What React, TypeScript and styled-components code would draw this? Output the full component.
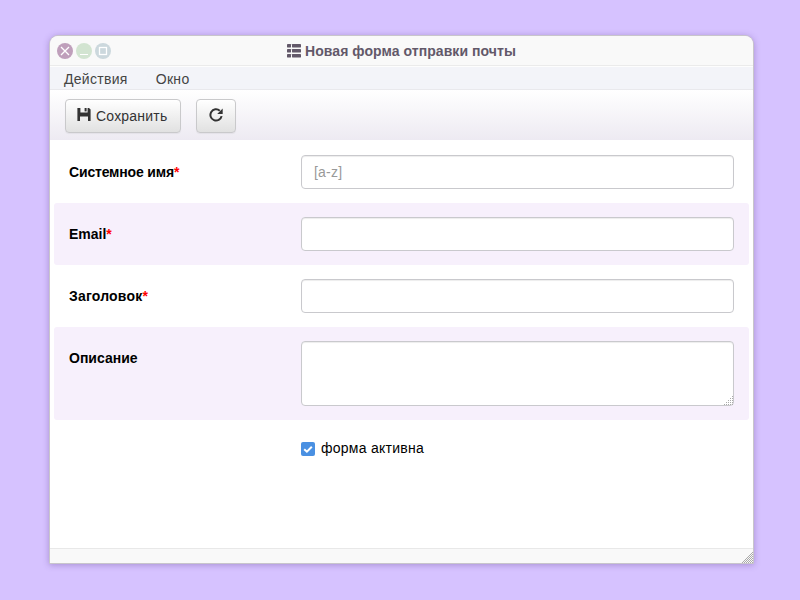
import React from "react";
import styled, { createGlobalStyle } from "styled-components";

const GlobalStyle = createGlobalStyle`
  * { box-sizing: border-box; }
  body {
    margin: 0;
    background: #d6c2ff;
    font-family: "Liberation Sans", Arial, sans-serif;
    font-size: 14px;
    line-height: 20px;
    color: #000;
  }
`;

const Desktop = styled.main`
  height: 600px;
  padding: 35px 0 0 49px;
  overflow: hidden;
`;

const Window = styled.section`
  position: relative;
  display: flex;
  flex-direction: column;
  width: 705px;
  height: 529px;
  border: 1px solid #c8c5cb;
  border-radius: 9px 9px 0 0;
  background: #fff;
  background-clip: padding-box;
  box-shadow: 0 1px 6px rgba(80, 50, 130, 0.35);
  overflow: hidden;
`;

const TitleBar = styled.header`
  display: grid;
  grid-template-columns: 1fr auto 1fr;
  align-items: center;
  height: 30px;
  padding: 0 7px;
  background: #f9f9f9;
  border-bottom: 1px solid #ebebeb;
`;

const Controls = styled.div`
  display: flex;
  gap: 3px;
`;

const Control = styled.span<{ $color: string }>`
  display: flex;
  width: 16px;
  height: 16px;
  border-radius: 50%;
  background: ${(p) => p.$color};
`;

const Title = styled.h1`
  display: flex;
  align-items: center;
  gap: 4px;
  margin: 0;
  font-size: 14px;
  line-height: 20px;
  letter-spacing: 0.06px;
  color: #625869;
`;

const MenuBar = styled.nav`
  display: flex;
  gap: 28px;
  height: 24px;
  padding: 2px 14px 0;
  border-top: 1px solid #fdfdfd;
  border-bottom: 1px solid #e9e9ed;
  background: #f3f4f9;
  color: #444;
`;

const MenuItem = styled.span`
  letter-spacing: 0.3px;
`;

const Toolbar = styled.div`
  display: flex;
  gap: 15px;
  height: 50px;
  padding: 9px 15px 0;
  background: linear-gradient(#fff, #edeaf2);
`;

const Button = styled.button<{ $width: number }>`
  display: flex;
  align-items: center;
  justify-content: center;
  gap: 5px;
  width: ${(p) => p.$width}px;
  height: 34px;
  padding: 0;
  border: 1px solid #c9c9cb;
  border-radius: 4px;
  background: linear-gradient(#fff, #e1e1e1);
  box-shadow: inset 0 1px 0 #fff, 0 1px 1px rgba(0, 0, 0, 0.05);
  font: inherit;
  letter-spacing: 0.2px;
  color: #333;

  svg {
    margin-bottom: 2px;
  }
`;

const SaveButton = styled(Button)`
  justify-content: flex-start;
  padding-left: 11px;
`;

const Form = styled.form`
  flex: 1;
  padding: 1px 4px 0;
`;

const Row = styled.div<{ $tinted?: boolean }>`
  display: grid;
  grid-template-columns: 232px 1fr;
  padding: 14px 15px;
  border-radius: 3px;
  background: ${(p) => (p.$tinted ? "#f7f0fc" : "transparent")};
`;

const Label = styled.label<{ $spacing?: number }>`
  padding-top: 7px;
  font-weight: bold;
  letter-spacing: ${(p) => p.$spacing ?? 0}px;
`;

const Required = styled.span`
  color: #f00;
  letter-spacing: 0;
`;

const Input = styled.input`
  width: 100%;
  height: 34px;
  padding: 6px 12px;
  border: 1px solid #c9c9cd;
  border-radius: 4px;
  background: #fff;
  box-shadow: inset 0 1px 1px rgba(0, 0, 0, 0.075);
  font: inherit;
  letter-spacing: 0.2px;
  outline: none;
  &::placeholder { color: #999; opacity: 1; }
`;

const AreaWrap = styled.div`
  position: relative;
  height: 65px;
`;

const Area = styled.textarea`
  display: block;
  width: 100%;
  height: 65px;
  padding: 6px 12px;
  border: 1px solid #c9c9cd;
  border-radius: 4px;
  background: #fff;
  box-shadow: inset 0 1px 1px rgba(0, 0, 0, 0.075);
  font: inherit;
  resize: none;
`;

const AreaGrip = styled.svg`
  position: absolute;
  right: 1px;
  bottom: 1px;
`;

const Check = styled.label`
  grid-column: 2;
  display: flex;
  align-items: center;
  gap: 6px;
  height: 20px;
  margin-top: 4px;
  letter-spacing: 0.26px;
`;

const Box = styled.span`
  display: flex;
  width: 14px;
  height: 14px;
  margin-top: 2px;
  border-radius: 2px;
  background: #4a90e2;
`;

const Footer = styled.footer`
  height: 15px;
  border-top: 1px solid #e8e8e8;
  background: #f9f9f9;
`;

const WindowGrip = styled.svg`
  position: absolute;
  right: 0;
  bottom: 0;
`;

function dots(size: number) {
  const out: React.ReactElement[] = [];
  for (let y = 0; y < size; y++)
    for (let x = size - 1 - y; x < size; x++)
      if ((x + y) % 2 === 0) out.push(<rect key={`${x}-${y}`} x={x} y={y} width="1" height="1" />);
  return out;
}

function sparseDots() {
  const out: React.ReactElement[] = [];
  for (let r = 0; r < 5; r++)
    for (let c = 4 - r; c < 5; c++)
      out.push(<rect key={`${r}-${c}`} x={c * 2} y={r * 2} width="1" height="1" />);
  return out;
}

const ListIcon = () => (
  <svg width="14" height="14" fill="currentColor">
    {[0, 5, 10].map((y) => (
      <React.Fragment key={y}>
        <rect x="0" y={y} width="4" height="3.4" rx=".4" />
        <rect x="5" y={y} width="9" height="3.4" rx=".4" />
      </React.Fragment>
    ))}
  </svg>
);

const SaveIcon = () => (
  <svg width="14" height="14" fill="currentColor">
    <path d="M.4 0H3.4V4.4H10.6V0H12L13.6 1.6V13H11V8.4H3V13H.4z" />
    <rect x="7.6" y="0" width="2" height="3.4" />
  </svg>
);

const RepeatIcon = () => (
  <svg width="14" height="14" fill="none">
    <path d="M12.6 8.1A5.65 5.65 0 1 1 10.8 2.7" stroke="currentColor" strokeWidth="2" />
    <path d="M13.7.4V6H8.2z" fill="currentColor" />
  </svg>
);

export default function App() {
  return (
    <>
      <GlobalStyle />
      <Desktop>
        <Window>
          <TitleBar>
            <Controls>
              <Control $color="#bf9fbb">
                <svg width="16" height="16" stroke="#fff" strokeWidth="1.3"><path d="M4 4l8 8M12 4l-8 8" /></svg>
              </Control>
              <Control $color="#d2e4d1">
                <svg width="16" height="16" fill="#fff"><rect x="4" y="11" width="8" height="1" /></svg>
              </Control>
              <Control $color="#ccd8dd">
                <svg width="16" height="16" fill="none" stroke="#fff" strokeWidth="1.3"><rect x="4.5" y="4.5" width="7" height="7" /></svg>
              </Control>
            </Controls>
            <Title><ListIcon />Новая форма отправки почты</Title>
          </TitleBar>
          <MenuBar>
            <MenuItem>Действия</MenuItem>
            <MenuItem>Окно</MenuItem>
          </MenuBar>
          <Toolbar>
            <SaveButton type="button" $width={116}><SaveIcon />Сохранить</SaveButton>
            <Button type="button" $width={40} aria-label="Обновить"><RepeatIcon /></Button>
          </Toolbar>
          <Form>
            <Row>
              <Label $spacing={-0.17}>Системное имя<Required>*</Required></Label>
              <Input placeholder="[a-z]" />
            </Row>
            <Row $tinted>
              <Label>Email<Required>*</Required></Label>
              <Input />
            </Row>
            <Row>
              <Label $spacing={0.2}>Заголовок<Required>*</Required></Label>
              <Input />
            </Row>
            <Row $tinted>
              <Label>Описание</Label>
              <AreaWrap>
                <Area />
                <AreaGrip width="9" height="9" fill="#aaa">{sparseDots()}</AreaGrip>
              </AreaWrap>
            </Row>
            <Row>
              <Check>
                <Box>
                  <svg width="14" height="14" fill="none" stroke="#fff" strokeWidth="2"><path d="M3.2 7.2l2.7 2.5 4.9-5" /></svg>
                </Box>
                форма активна
              </Check>
            </Row>
          </Form>
          <Footer />
          <WindowGrip width="11" height="11" fill="#aaa">{dots(11)}</WindowGrip>
        </Window>
      </Desktop>
    </>
  );
}
